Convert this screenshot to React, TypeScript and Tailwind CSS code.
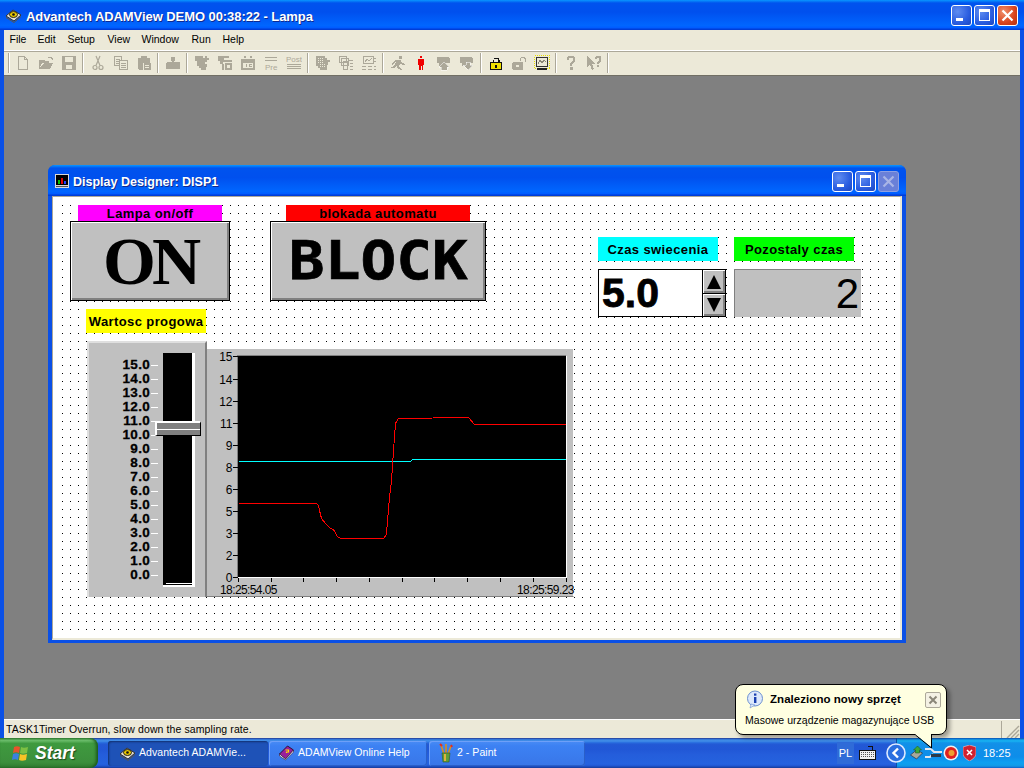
import type { ReactNode } from "react"

const TITLE_BAR =
  "bg-[linear-gradient(180deg,#0997ff_0%,#0053ee_10%,#0050ee_40%,#0066ff_85%,#005bff_93%,#003dd7_97%,#003dd7_100%)]"
const GRAY = "#aca899"

function Caption({ kind, disabled }: { kind: "min" | "max" | "close"; disabled?: boolean }) {
  const face =
    kind === "close"
      ? disabled
        ? "bg-[#6a80d8] border-[#8fa0e0]"
        : "bg-[radial-gradient(circle_at_30%_30%,#f0906c,#d9431c_60%,#b5300e)] border-white"
      : "bg-[radial-gradient(circle_at_30%_30%,#5f8cf0,#2a5de0_60%,#1c46c0)] border-white"
  const ink = disabled ? "#a9b5e6" : "#ffffff"
  return (
    <div className={`h-[21px] w-[21px] rounded-[3px] border ${face}`}>
      <svg width="19" height="19" viewBox="0 0 19 19" shapeRendering="crispEdges">
        {kind === "min" && <rect x="4" y="12" width="7" height="3" fill={ink} />}
        {kind === "max" && (
          <path d="M4 3h11v12H4z M5 6v8h9V6z" fill={ink} fillRule="evenodd" />
        )}
        {kind === "close" && (
          <path d="M4.5 4.5l10 10M14.5 4.5l-10 10" stroke={ink} strokeWidth="2.2" shapeRendering="auto" />
        )}
      </svg>
    </div>
  )
}

function AdamIcon() {
  return (
    <svg width="17" height="15" viewBox="0 0 17 15">
      <path d="M1 8l7-6 8 5-7 6z" fill="#e4e0d4" stroke="#333" strokeWidth="1" />
      <path d="M1 9.5l8 5 7-6" fill="none" stroke="#555" strokeWidth="1" />
      <ellipse cx="8.5" cy="6.5" rx="4" ry="3" fill="#e8c800" stroke="#222" />
      <circle cx="8.5" cy="6.5" r="1.3" fill="#111" />
    </svg>
  )
}

function Ic({ children }: { children: ReactNode }) {
  return (
    <svg width="16" height="16" viewBox="0 0 16 16" fill={GRAY} shapeRendering="crispEdges">
      {children}
    </svg>
  )
}

const ICONS: Record<string, ReactNode> = {
  new: <path d="M3.5 1.5h6l3 3v10h-9z M9.5 1.5v3h3" fill="none" stroke={GRAY} />,
  open: <path d="M1 14V5h5l1 1h4v2H4l-3 6h11l3-6H6z M10 2h3l2 2-1 1-2-2h-2z" />,
  save: <path d="M1 1h14v14H1z M4 2v5h8V2z M5 10v4h6v-4z" fillRule="evenodd" />,
  cut: (
    <g fill="none" stroke={GRAY} strokeWidth="1.2" shapeRendering="auto">
      <circle cx="5" cy="12.5" r="2" />
      <circle cx="11" cy="12.5" r="2" />
      <path d="M6 10.5L10 1M10 10.5L6 1" />
    </g>
  ),
  copy: (
    <g fill="none" stroke={GRAY}>
      <path d="M1.5 1.5h7v9h-7z M3 4h4M3 6h4M3 8h4" />
      <path d="M6.5 5.5h8v9h-8z M8 8h5M8 10h5M8 12h5" fill="#ece9d8" />
    </g>
  ),
  paste: <path d="M2 3h3V1h6v2h3v5H8v7H3l-1-1z M7 8h8v7H7z M9 10v1h4v-1z M9 12v1h4v-1z" fillRule="evenodd" />,
  stamp: <path d="M6 2h4v4h-1v1h5l1 1v6H1V8l1-1h5V6H6z" />,
  add1: <path d="M1 1h8v2h2V1h2v2h2v2h-2v2h-2v2h2v3h-1v3H7v-2H5v-2H3V6H1z" />,
  add2: <path d="M1 1h11v2H7v2h8v2H6v2h1v6H5V9H3V6H1z M8 8h7v7H8z M10 10v3h3v-3z" fillRule="evenodd" />,
  cal: <path d="M1 4h14v11H1z M4 1h2v2H4z M10 1h2v2h-2z M3 8v5h10V8z M6 9h1v3H6z M9 9h3v1h-2v1h2v1H9z" fillRule="evenodd" />,
  pre: (
    <g>
      <path d="M2 2h12v1H2z M2 5h12v1H2z" />
      <text x="2" y="14.5" fontSize="8" fontFamily="Liberation Sans" fill={GRAY} shapeRendering="auto">Pre</text>
    </g>
  ),
  post: (
    <g>
      <text x="0" y="7" fontSize="8" fontFamily="Liberation Sans" fill={GRAY} shapeRendering="auto">Post</text>
      <path d="M1 9h14v1H1z M1 11h14v1H1z M1 13h14v1H1z" />
    </g>
  ),
  stack1: (
    <g>
      <path d="M1 1h9v2h2v2h3v2h-2v3h-1v5H5v-2H3v-2H1z" />
      <path d="M3 3h5M3 5h5M3 7h5M5 9h5M5 11h5" stroke="#ece9d8" strokeDasharray="1 1" />
    </g>
  ),
  stack2: (
    <g fill="none" stroke={GRAY}>
      <path d="M1.5 1.5h7v6h-7z M3.5 3.5h7v7h-7z M5.5 6.5h4v8h-4z" />
      <path d="M10 5h5M12 8h3M12 11h3M12 14h3" />
    </g>
  ),
  panel: (
    <g>
      <path d="M2 1h11v8H2z M3 2v6h9V2z" fillRule="evenodd" />
      <path d="M4 7l2-3 2 2 3-3" fill="none" stroke={GRAY} />
      <path d="M1 11h4v1H1z M7 11h4v1H7z M1 14h4v1H1z M7 14h4v1H7z M13 3h2v1h-2z M13 6h2v1h-2z M13 11h2v1h-2z M13 14h2v1h-2z" />
    </g>
  ),
  run: <path d="M9 1h3v3H9z M6 5h5l1 3 3 1-1 1-4-1-1 3 3 2-1 1-4-2 0-3-2 3H1v-1l3-1 2-4-2 1-1 2H2l1-3z" />,
  man: <path d="M7 1h2v2H7z M5 4h6v6h-1v5H8.5v-4h-1v4H6v-5H5z" fill="#f00000" />,
  up: (
    <g>
      <path d="M1 2h11l2 2v4H1z M3 8h5v3H3z" />
      <path d="M5 15v-3H3l5-5 5 5h-2v3z" stroke="#fff" strokeWidth="0.5" />
    </g>
  ),
  down: (
    <g>
      <path d="M1 2h11l2 2v4H1z M3 8h5v3H3z" />
      <path d="M7 7h4v3h3l-5 5-5-5h3z" stroke="#fff" strokeWidth="0.5" />
    </g>
  ),
  lock: (
    <g>
      <path d="M4.5 8V4.5h1V3h5v1.5h1V8H10V4H6v4z" fill="#111" />
      <rect x="2.5" y="7.5" width="11" height="7" fill="#f0e000" stroke="#111" />
      <rect x="7" y="10" width="2" height="3" fill="#111" />
    </g>
  ),
  unlock: (
    <g>
      <path d="M9 6V3h1V2h4v1h1v4h-1V4h-1V3h-3v3z" />
      <path d="M1 8l1-1h9l1 1v6l-1 1H2l-1-1z M5 10v2h3v-2z" fillRule="evenodd" />
    </g>
  ),
  mon: (
    <g>
      <rect x="0.5" y="0.5" width="15" height="13" fill="none" stroke="#e8e000" strokeDasharray="1 1" />
      <rect x="2.5" y="2.5" width="11" height="9" fill="#ece9d8" stroke="#333" />
      <path d="M4 9l2-4 2 3 2-3 2 2" fill="none" stroke="#8a8678" />
      <path d="M3 13h10v2H3z" fill="#222" />
    </g>
  ),
  help: <path d="M4 2l2-1h4l2 1v5l-3 2v2H7V8l3-2V3H6v2H4z M7 12h2.5v3H7z" />,
  whats: <path d="M1 1l8 8H6l2 5-2 1-2-5-3 2z M9 2l1-1h4l1 1v4l-2 2v1h-2V7l2-2V3h-2v1H9z M11 10h2v2h-2z" />,
}

const TOOL_GROUPS = [
  ["new", "open", "save"],
  ["cut", "copy", "paste"],
  ["stamp"],
  ["add1", "add2", "cal", "pre", "post"],
  ["stack1", "stack2", "panel"],
  ["run", "man", "up", "down"],
  ["lock", "unlock", "mon"],
  ["help", "whats"],
]

const MENUS = [
  { label: "File", cls: "w-[28px]" },
  { label: "Edit", cls: "w-[30px]" },
  { label: "Setup", cls: "w-[40px]" },
  { label: "View", cls: "w-[34px]" },
  { label: "Window", cls: "w-[50px]" },
  { label: "Run", cls: "w-[31px]" },
  { label: "Help", cls: "w-[30px]" },
]

function Toolbar() {
  return (
    <div className="flex h-[25px] items-center border-t border-t-white bg-[#ece9d8] pl-[4px] shadow-[inset_0_1px_0_#aca899]">
      <div className="mr-[1px] h-[20px] w-[2px] border-l border-r border-l-[#aca899] border-r-white" />
      {TOOL_GROUPS.map((group, i) => (
        <div key={i} className="flex items-center">
          {group.map((name, k) => (
            <div key={k} className="flex h-[20px] w-[23px] items-center justify-center">
              <Ic>{ICONS[name]}</Ic>
            </div>
          ))}
          <div className="mx-[2px] h-[20px] w-[2px] border-l border-r border-l-[#aca899] border-r-white" />
        </div>
      ))}
    </div>
  )
}

function Flat({ className, children }: { className: string; children: ReactNode }) {
  return (
    <div
      className={`absolute flex items-center justify-center pt-[1px] text-[13px] font-bold tracking-[0.4px] text-black ${className}`}
    >
      {children}
    </div>
  )
}

function Push({ className, children }: { className: string; children: ReactNode }) {
  return (
    <div
      className={`absolute flex items-center justify-center overflow-hidden border border-black bg-[#c0c0c0] shadow-[inset_1px_1px_0_#fff,inset_-2px_-2px_0_#808080] ${className}`}
    >
      {children}
    </div>
  )
}

const SCALE = ["15.0", "14.0", "13.0", "12.0", "11.0", "10.0", "9.0", "8.0", "7.0", "6.0", "5.0", "4.0", "3.0", "2.0", "1.0", "0.0"]

function Slider() {
  return (
    <div className="absolute left-[34px] top-[144px] flex h-[256px] w-[120px] border-l-2 border-t-2 border-r-2 border-l-[#dfdfdf] border-t-[#dfdfdf] border-r-[#808080] bg-[#c0c0c0]">
      <div className="ml-[1px] mt-[15px] w-[68px]">
        {SCALE.map((v) => (
          <div key={v} className="flex h-[14px] items-center justify-end">
            <span className="text-[13.5px] font-bold tracking-[0.3px] text-black [-webkit-text-stroke:0.3px_black]">{v}</span>
            <span className="ml-[1px] h-[1px] w-[7px] bg-white" />
          </div>
        ))}
      </div>
      <div className="relative ml-[5px] mt-[10px] h-[234px] w-[32px] border-b-2 border-r-[3px] border-b-white border-r-white bg-black">
        <div className="absolute bottom-[1px] left-[3px] right-0 h-[1px] bg-white" />
        <div className="absolute left-[-8px] top-[68px] flex h-[15px] w-[46px] flex-col border-b border-r border-b-black border-r-black border-l-2 border-t-2 border-l-white border-t-white bg-[#808080]">
          <div className="mt-[6px] h-[1px] bg-white" />
        </div>
      </div>
    </div>
  )
}

const YTICKS: [string, number][] = [
  ["15", 7], ["14", 30], ["12", 52], ["11", 74], ["9", 96], ["8", 118],
  ["6", 140], ["5", 162], ["3", 184], ["2", 206], ["0", 228],
]
const XTICKS = [31, 64, 96, 129, 162, 195, 227, 260, 293, 326, 359]
const RED =
  "31,154 109,154 111,156 112,161 114,169 118,174 123,179 126,180 130,187 133,189 176,189 179,185 180,171 182,148 184,131 186,101 188,74 191,69 261,68 267,75 358,75"
const CYAN = "31,112 203,112 205,110 358,110"

function Chart() {
  return (
    <div className="absolute left-[154px] top-[152px] h-[248px] w-[367px] border-b border-r border-b-[#808080] border-r-white bg-[#c0c0c0]">
      <svg className="overflow-visible" width="366" height="247" viewBox="0 0 366 247" fontFamily="Liberation Sans" fontSize="12">
        <rect x="31" y="7" width="328" height="221" fill="#000" />
        <path d="M30.5 7V228" stroke="#808080" />
        <path d="M30 6.5H359" stroke="#808080" />
        <path d="M359.5 7V229M31 228.5H360" stroke="#fff" />
        {YTICKS.map(([label, y]) => (
          <g key={label}>
            <path d={`M26 ${y + 0.5}H31`} stroke="#000" />
            <text x="25.5" y={y + 4.5} textAnchor="end" fill="#000">{label}</text>
          </g>
        ))}
        {XTICKS.map((x) => (
          <path key={x} d={`M${x + 0.5} 229V233`} stroke="#000" />
        ))}
        <text x="13" y="245" fill="#000" letterSpacing="-0.6">18:25:54.05</text>
        <text x="310" y="245" fill="#000" letterSpacing="-0.6">18:25:59.23</text>
        <g transform="translate(0.5 0.5)" shapeRendering="crispEdges" fill="none" strokeWidth="1">
          <polyline points={CYAN} stroke="#00ffff" />
          <polyline points={RED} stroke="#ff0000" />
        </g>
      </svg>
    </div>
  )
}

function DesignerWindow() {
  return (
    <div className="absolute left-[44px] top-[89px] flex h-[478px] w-[858px] flex-col rounded-t-[7px] bg-[#0a50e6] px-[4px] pb-[3px]">
      <div className={`-mx-[4px] flex h-[31px] items-center rounded-t-[7px] pl-[7px] pr-[7px] pt-[1px] ${TITLE_BAR}`}>
        <svg width="14" height="14" viewBox="0 0 14 14" shapeRendering="crispEdges">
          <rect width="14" height="14" fill="#d8d8d8" />
          <rect x="1" y="1" width="12" height="10" fill="#000" />
          <rect x="3" y="6" width="2" height="4" fill="#00c000" />
          <rect x="6" y="4" width="2" height="6" fill="#e00000" />
          <rect x="9" y="7" width="2" height="3" fill="#2040ff" />
          <rect x="1" y="12" width="12" height="1" fill="#555" />
        </svg>
        <span className="ml-[4px] flex-1 pt-[2px] text-[12.5px] font-bold text-white [text-shadow:1px_1px_0_#0f2a90]">
          Display Designer: DISP1
        </span>
        <div className="flex gap-[2px]">
          <Caption kind="min" />
          <Caption kind="max" />
          <Caption kind="close" disabled />
        </div>
      </div>
      <div className="relative flex-1 border-b-2 border-l border-r-2 border-t border-b-[#ece9d8] border-l-[#aca899] border-r-[#ece9d8] border-t-[#aca899] bg-white font-['Liberation_Sans',sans-serif]">
        <div className="absolute bottom-[8px] left-[9px] right-[5px] top-[8px] bg-black bg-[linear-gradient(to_right,transparent_1px,white_1px),linear-gradient(to_bottom,transparent_1px,white_1px)] bg-[size:8px_8px]" />
        <Flat className="left-[25px] top-[8px] h-[16px] w-[144px] bg-[#ff00ff]">Lampa on/off</Flat>
        <Push className="left-[17px] top-[24px] h-[80px] w-[160px]">
          <span className="font-['Liberation_Serif',serif] text-[68px] font-bold leading-none tracking-[-4px] text-black">ON</span>
        </Push>
        <Flat className="left-[233px] top-[8px] h-[16px] w-[184px] bg-[#ff0000] tracking-[0.2px]">blokada automatu</Flat>
        <Push className="left-[217px] top-[24px] h-[80px] w-[216px]">
          <span className="scale-x-[1.1] font-['DejaVu_Sans_Mono',monospace] text-[54px] font-bold leading-none tracking-[0px] text-black [-webkit-text-stroke:0.7px_black]">BLOCK</span>
        </Push>
        <Flat className="left-[33px] top-[112px] h-[24px] w-[120px] bg-[#ffff00]">Wartosc progowa</Flat>
        <Slider />
        <Chart />
        <Flat className="left-[545px] top-[40px] h-[24px] w-[120px] bg-[#00ffff]">Czas swiecenia</Flat>
        <Flat className="left-[681px] top-[40px] h-[24px] w-[120px] bg-[#00ff00]">Pozostaly czas</Flat>
        <div className="absolute left-[545px] top-[72px] flex h-[48px] w-[128px] border border-black bg-white">
          <span className="ml-[3px] flex-1 text-[41px] font-bold leading-[46px] text-black [-webkit-text-stroke:0.8px_black]">5.0</span>
          <div className="flex w-[23px] flex-col border-l border-black">
            <div className="flex h-[24px] items-center justify-center border-b border-black bg-[#c0c0c0] shadow-[inset_1px_1px_0_#fff,inset_-2px_-2px_0_#808080]">
              <svg width="16" height="16" viewBox="0 0 16 16"><path d="M8 1l7 14H1z" fill="#000" /></svg>
            </div>
            <div className="flex flex-1 items-center justify-center bg-[#c0c0c0] shadow-[inset_1px_1px_0_#fff,inset_-2px_-2px_0_#808080]">
              <svg width="16" height="16" viewBox="0 0 16 16"><path d="M8 15L1 1h14z" fill="#000" /></svg>
            </div>
          </div>
        </div>
        <div className="absolute left-[681px] top-[72px] flex h-[48px] w-[127px] items-center justify-end border-l border-t border-l-[#808080] border-t-[#808080] bg-[#c0c0c0] pr-[2px]">
          <span className="text-[42px] leading-none text-black">2</span>
        </div>
      </div>
    </div>
  )
}

function Flag() {
  return (
    <svg width="20" height="18" viewBox="0 0 20 18">
      <path d="M3 3c2-1 4-1 6 0l-1 6c-2-1-4-1-6 0z" fill="#e8532b" />
      <path d="M10 3c2 1 4 1 7 0l-1 6c-3 1-5 1-7 0z" fill="#7cc043" />
      <path d="M2 10c2-1 4-1 6 0l-1 6c-2-1-4-1-6 0z" fill="#3b80e0" />
      <path d="M9 10c2 1 4 1 7 0l-1 6c-3 1-5 1-7 0z" fill="#f8c326" />
    </svg>
  )
}

function HelpBook() {
  return (
    <svg width="17" height="16" viewBox="0 0 16 16">
      <path d="M1 9l8-8 6 4-8 9z" fill="#9a1f9a" stroke="#301030" />
      <path d="M1 9l6 5 8-9v2l-8 8-6-4z" fill="#fff" stroke="#301030" strokeWidth="0.6" />
      <path d="M7 5h3v2H8v1" stroke="#ffe000" strokeWidth="1.2" fill="none" />
    </svg>
  )
}

function PaintCup() {
  return (
    <svg width="16" height="20" viewBox="0 0 16 20">
      <path d="M3 2l3 9M8 1v10M13 3l-3 8" stroke="#d89020" strokeWidth="1.6" />
      <path d="M2 1l2 2M13 2l1 2" stroke="#e03020" strokeWidth="2" />
      <path d="M4 10h8l-1 9H5z" fill="#5f9e3a" stroke="#3a5a20" strokeWidth="0.6" />
      <path d="M6 11h2v7H6z" fill="#e0b040" />
    </svg>
  )
}

function TaskButton({ label, icon, active, cls }: { label: string; icon: ReactNode; active?: boolean; cls: string }) {
  return (
    <div
      className={`flex h-[25px] items-center gap-[3px] rounded-[3px] text-[10.5px] tracking-[0.05px] text-white ${cls} ${
        active
          ? "bg-[#1e52b7] shadow-[inset_1px_1px_2px_#12306f]"
          : "bg-[linear-gradient(180deg,#4a8cf5_0%,#3c81f3_20%,#3976e8_100%)] shadow-[inset_1px_1px_0_#6ea0f8,inset_-1px_-1px_0_#2a5fc8]"
      }`}
    >
      {icon}
      <span className="whitespace-nowrap">{label}</span>
    </div>
  )
}

function Balloon() {
  return (
    <div className="absolute left-[735px] top-[684px] h-[51px] w-[212px] rounded-[8px] border border-black bg-[#ffffe1] shadow-[3px_3px_4px_rgba(0,0,0,0.35)]">
      <svg className="absolute left-[179px] top-[48px]" width="20" height="16" viewBox="0 0 20 16">
        <path d="M0 1L16 14V1" fill="#ffffe1" />
        <path d="M0.5 2L16.5 15V2" fill="none" stroke="#000" />
        <rect x="1" y="0" width="15" height="2" fill="#ffffe1" />
      </svg>
      <div className="flex items-center pl-[10px] pt-[5px]">
        <svg width="18" height="19" viewBox="0 0 18 19">
          <circle cx="9" cy="8.5" r="7.5" fill="#dce8fb" stroke="#6b8fd0" />
          <path d="M5 14l-1 4 5-3z" fill="#dce8fb" stroke="#6b8fd0" strokeWidth="0.6" />
          <rect x="8" y="3.5" width="2.4" height="2.2" fill="#1a3fb0" />
          <rect x="8" y="7" width="2.4" height="6" fill="#1a3fb0" />
        </svg>
        <span className="ml-[6px] flex-1 text-[11.5px] font-bold tracking-[0.05px] text-black">Znaleziono nowy sprzęt</span>
        <div className="mr-[5px] flex h-[16px] w-[16px] items-center justify-center rounded-[2px] border border-[#aca899] bg-[#f4f1e4]">
          <svg width="10" height="10" viewBox="0 0 10 10">
            <path d="M1.5 1.5l7 7M8.5 1.5l-7 7" stroke="#8a8678" strokeWidth="2" />
          </svg>
        </div>
      </div>
      <div className="ml-[9px] mt-[4px] text-[10.5px] tracking-[0.02px] text-black">Masowe urządzenie magazynujące USB</div>
    </div>
  )
}

function Tray() {
  return (
    <div className="flex h-full w-[128px] items-center border-l border-l-[#0c4ea8] bg-[linear-gradient(180deg,#0c59b9_1%,#139ee9_6%,#18b5f2_10%,#139beb_14%,#1290e8_19%,#0d8dea_63%,#0d9ff1_81%,#0f9eed_88%,#119be9_91%,#1392e2_94%,#137ed7_97%,#095bc9_100%)]">
      <svg className="-ml-[11px]" width="20" height="20" viewBox="0 0 20 20">
        <circle cx="10" cy="10" r="9" fill="#2a6fe0" stroke="#dfeaff" strokeWidth="1.6" />
        <path d="M12 5.5L7.5 10l4.5 4.5" fill="none" stroke="#fff" strokeWidth="2.4" />
      </svg>
      <svg className="ml-[2px]" width="17" height="16" viewBox="0 0 16 16">
        <path d="M2 10l6-5 6 3-6 6z" fill="#a8a89c" stroke="#223" strokeWidth="0.6" />
        <path d="M7 8V5H5l4-4 4 4h-2v3z" fill="#3aa83a" stroke="#185018" strokeWidth="0.5" />
      </svg>
      <svg className="-ml-[1px]" width="19" height="14" viewBox="0 0 19 14">
        <path d="M1 3h6l3 3h8" fill="none" stroke="#dfe6f0" strokeWidth="2" />
        <path d="M1 11h5l3-3" fill="none" stroke="#dfe6f0" strokeWidth="2" />
        <path d="M7 8h10v3H7z" fill="#2a3a4a" />
      </svg>
      <svg width="16" height="16" viewBox="0 0 16 16">
        <circle cx="8" cy="8" r="7.5" fill="#f0f0f0" />
        <circle cx="8" cy="8" r="6" fill="#e02020" />
        <circle cx="8.5" cy="8" r="3" fill="#f0a030" />
      </svg>
      <svg className="ml-[4px]" width="13" height="16" viewBox="0 0 13 16">
        <path d="M6.5 0L13 2v6c0 4-3 6-6.5 8C3 14 0 12 0 8V2z" fill="#d02030" stroke="#f0d0d0" strokeWidth="0.6" />
        <path d="M4 5l5 5M9 5l-5 5" stroke="#fff" strokeWidth="1.5" />
      </svg>
      <span className="ml-[7px] text-[11px] text-white">18:25</span>
    </div>
  )
}

export default function App() {
  return (
    <div className="relative flex h-[768px] w-[1024px] flex-col overflow-hidden bg-[#808080] font-['Liberation_Sans',sans-serif]">
      <div className={`flex h-[30px] items-center pl-[5px] pr-[6px] ${TITLE_BAR}`}>
        <AdamIcon />
        <span className="ml-[4px] flex-1 pt-[3px] text-[13px] font-bold tracking-[-0.07px] text-white [text-shadow:1px_1px_0_#0f2a90]">
          Advantech ADAMView DEMO 00:38:22 - Lampa
        </span>
        <div className="flex gap-[2px]">
          <Caption kind="min" />
          <Caption kind="max" />
          <Caption kind="close" />
        </div>
      </div>

      <div className="flex flex-1 flex-col border-x-4 border-x-[#0a50e6]">
        <div className="flex h-[20px] items-center bg-[#ece9d8] pb-[1px] pl-[5.5px] text-[10.5px] text-black">
          {MENUS.map((m) => (
            <span key={m.label} className={m.cls}>
              {m.label}
            </span>
          ))}
        </div>
        <Toolbar />
        <div className="relative flex-1 border-t border-t-[#716f64] bg-[#808080]">
          <DesignerWindow />
        </div>
        <div className="flex h-[19px] items-center border-t border-t-white bg-[#ece9d8] pl-[2px] text-[10.5px] tracking-[0.1px] text-black">
          <span className="flex-1 pt-[2px]">TASK1Timer Overrun, slow down the sampling rate.</span>
          <div className="h-[17px] w-[1px] bg-[#aca899]" />
          <svg className="ml-[2px] self-end" width="16" height="16" viewBox="0 0 16 16">
            <path d="M15 4L3 16M15 8l-8 8M15 12l-4 4" stroke="#aca899" strokeWidth="1.4" />
          </svg>
        </div>
      </div>

      <div className="flex h-[30px] items-center bg-[linear-gradient(180deg,#1f2f86_0%,#3165c4_3%,#3682e5_6%,#4490e6_10%,#3883e5_12%,#2b71e0_15%,#2663da_18%,#235bd6_20%,#2258d5_23%,#2157d6_38%,#245ddb_54%,#2562df_86%,#245fdc_89%,#2158d4_92%,#1d4ec0_95%,#1941a5_98%)]">
        <div className="flex h-full w-[98px] items-center rounded-r-[8px] bg-[linear-gradient(180deg,#3f8f3f_0%,#6cbf6c_8%,#3f9a3f_18%,#3c8f3c_80%,#2f7a2f_100%)] pl-[11px] shadow-[inset_-2px_0_3px_#1c5a1c]">
          <Flag />
          <span className="ml-[4px] text-[17.5px] font-bold italic text-white [text-shadow:1px_1px_1px_#1c4a1c]">Start</span>
        </div>
        <div className="ml-[10px] flex gap-[1px]">
          <TaskButton cls="w-[160px] pl-[11px]" active label="Advantech ADAMVie..." icon={<AdamIcon />} />
          <TaskButton cls="w-[158px] pl-[9px]" label="ADAMView Online Help" icon={<HelpBook />} />
          <TaskButton cls="ml-[1px] w-[156px] pl-[9px]" label="2 - Paint" icon={<PaintCup />} />
        </div>
        <div className="flex flex-1 items-center justify-end pr-[20px]">
          <span className="flex h-[22px] w-[17px] items-center justify-center bg-[#2f6bd8] text-[11px] text-white">PL</span>
          <svg className="ml-[5px]" width="17" height="14" viewBox="0 0 17 14" shapeRendering="crispEdges">
            <rect x="0.5" y="4.5" width="16" height="9" fill="#f2f2f2" stroke="#111" />
            <path d="M2 6h13M2 8h13M2 10h13" stroke="#555" strokeDasharray="1 1" />
            <path d="M9 0h4v4" fill="none" stroke="#111" />
          </svg>
        </div>
        <Tray />
      </div>

      <Balloon />
    </div>
  )
}
